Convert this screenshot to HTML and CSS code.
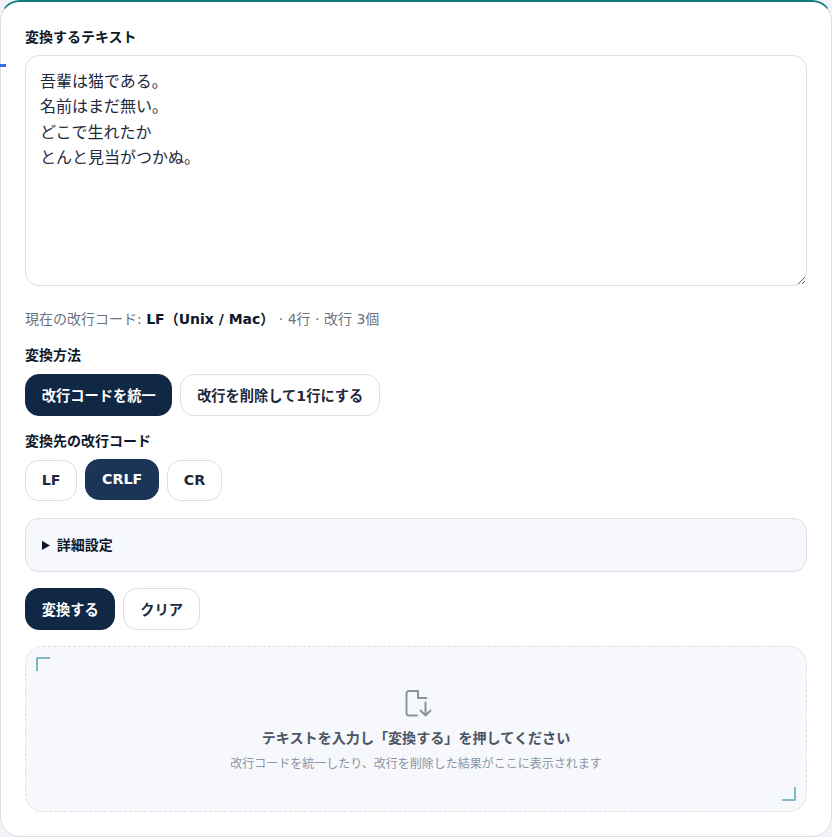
FILE: index.html
```html
<html>
<head>
    <title>改行コード変換</title>
    <link rel="stylesheet" href="styles.css">
</head>
<body>
    <span class="edge-tick"></span>
    <div class="card">
        <label class="field-label source-label" for="source">変換するテキスト</label>
        <textarea id="source" class="source-input">吾輩は猫である。
名前はまだ無い。
どこで生れたか
とんと見当がつかぬ。</textarea>

        <p class="status">現在の改行コード: <strong>LF（Unix / Mac）</strong> · 4行 · 改行 3個</p>

        <div class="field-label">変換方法</div>
        <div class="btn-row">
            <button class="btn btn-active">改行コードを統一</button>
            <button class="btn">改行を削除して1行にする</button>
        </div>

        <div class="field-label">変換先の改行コード</div>
        <div class="btn-row eol-row">
            <button class="btn">LF</button>
            <button class="btn btn-selected">CRLF</button>
            <button class="btn">CR</button>
        </div>

        <details class="advanced">
            <summary>詳細設定</summary>
        </details>

        <div class="btn-row action-row">
            <button class="btn btn-active">変換する</button>
            <button class="btn">クリア</button>
        </div>

        <div class="result">
            <span class="corner corner-tl"></span>
            <span class="corner corner-br"></span>
            <svg class="result-icon" width="28" height="28" viewBox="0 0 28 28" fill="none" stroke="#8b93a1" stroke-width="2" stroke-linecap="round" stroke-linejoin="round">
                <path d="M15 26.500H7a2.500 2.500 0 0 1-2.500-2.500V4.500A2.500 2.500 0 0 1 7 2h9v7h8.500"/>
                <path d="M23.500 13.500v13M18.500 21.500l5 5 5-5"/>
            </svg>
            <div class="result-title">テキストを入力し「変換する」を押してください</div>
            <div class="result-sub">改行コードを統一したり、改行を削除した結果がここに表示されます</div>
        </div>
    </div>
</body>
</html>
```

FILE: styles.css
```css
* {
    box-sizing: border-box;
}

body {
    margin: 0;
    background: #f1f5f9;
    font-family: "DejaVu Sans", "Noto Sans CJK JP", sans-serif;
    color: #0f172a;
}

.edge-tick {
    position: absolute;
    top: 64px;
    left: 0;
    width: 6px;
    height: 3px;
    background: #2f6fed;
}

.card {
    background: #ffffff;
    border: 1px solid #d8e0ea;
    border-top: 2px solid #0f7c7c;
    border-radius: 20px;
    height: 837px;
    padding: 26px 24px 24px;
}

.field-label {
    display: block;
    font-size: 14px;
    font-weight: 700;
    line-height: 18px;
    margin-bottom: 10px;
}

.source-label {
    margin-bottom: 9px;
}

.source-input {
    display: block;
    width: 100%;
    height: 231px;
    padding: 12.500px 14px;
    border: 1px solid #d8e0ea;
    border-radius: 14px;
    font-family: inherit;
    font-size: 16px;
    line-height: 25.600px;
    color: #1e293b;
    background: #ffffff;
}

.status {
    margin: 24px 0 18px;
    font-size: 14px;
    line-height: 18px;
    color: #6b7280;
}

.status strong {
    color: #0f172a;
}

.btn-row {
    display: flex;
    align-items: center;
    gap: 8px;
    margin-bottom: 16px;
}

.eol-row {
    margin-bottom: 17px;
}

.action-row {
    margin-bottom: 16px;
}

.btn {
    height: 41.500px;
    padding: 0 15.750px 1px;
    border: 1px solid #d8e0ea;
    border-radius: 14px;
    background: #ffffff;
    font-family: inherit;
    font-size: 14.240px;
    font-weight: 700;
    color: #1e293b;
}

.btn-active {
    background: #102843;
    border-color: #102843;
    color: #ffffff;
}

.btn-selected {
    background: #1b3558;
    border-color: #1b3558;
    color: #ffffff;
    transform: translateY(-1px);
}

.advanced {
    height: 54px;
    margin-bottom: 16px;
    padding: 0 16px;
    border: 1px solid #d8e0ea;
    border-radius: 14px;
    background: #f6f8fc;
    font-size: 14px;
    font-weight: 700;
}

.advanced summary {
    line-height: 52px;
}

.result {
    position: relative;
    height: 166px;
    padding-top: 42px;
    border: 1px dashed #d8e0ea;
    border-radius: 18px;
    background: #f6f8fc;
    text-align: center;
}

.result-icon {
    display: block;
    margin: 0 auto 11px;
    overflow: visible;
}

.result-title {
    font-size: 14.080px;
    font-weight: 700;
    line-height: 20px;
    color: #4b5563;
}

.result-sub {
    margin-top: 8px;
    font-size: 12px;
    line-height: 16px;
    color: #8b93a1;
}

.corner {
    position: absolute;
    width: 14px;
    height: 14px;
    border: 2px solid #7fb8c0;
}

.corner-tl {
    top: 10px;
    left: 10px;
    border-right: 0;
    border-bottom: 0;
    border-top-left-radius: 2px;
}

.corner-br {
    right: 10px;
    bottom: 10px;
    border-left: 0;
    border-top: 0;
    border-bottom-right-radius: 2px;
}
```
